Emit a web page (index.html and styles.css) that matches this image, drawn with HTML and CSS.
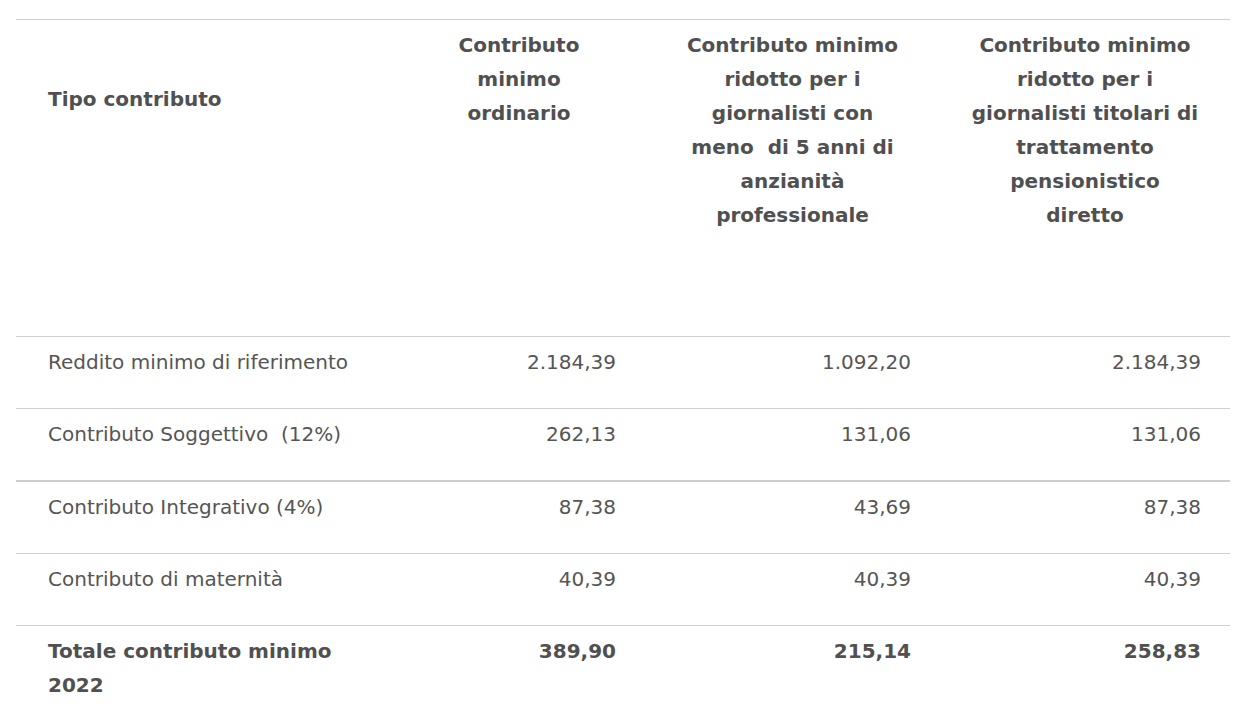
FILE: index.html
```html
<!DOCTYPE html>
<html lang="it">
<head>
<meta charset="utf-8">
<title>Contributo minimo 2022</title>
<link rel="stylesheet" href="styles.css">
</head>
<body>
<table class="tbl">
  <colgroup>
    <col class="c1"><col class="c2"><col class="c3"><col class="c4">
  </colgroup>
  <thead>
    <tr class="head">
      <th class="first">Tipo contributo</th>
      <th>Contributo<br>minimo<br>ordinario</th>
      <th>Contributo minimo<br>ridotto per i<br>giornalisti con<br>meno&nbsp; di 5 anni di<br>anzianità<br>professionale</th>
      <th>Contributo minimo<br>ridotto per i<br>giornalisti titolari di<br>trattamento<br>pensionistico<br>diretto</th>
    </tr>
  </thead>
  <tbody>
    <tr><td>Reddito minimo di riferimento</td><td class="num">2.184,39</td><td class="num">1.092,20</td><td class="num">2.184,39</td></tr>
    <tr><td>Contributo Soggettivo&nbsp; (12%)</td><td class="num">262,13</td><td class="num">131,06</td><td class="num">131,06</td></tr>
    <tr class="thick"><td>Contributo Integrativo (4%)</td><td class="num">87,38</td><td class="num">43,69</td><td class="num">87,38</td></tr>
    <tr><td>Contributo di maternità</td><td class="num">40,39</td><td class="num">40,39</td><td class="num">40,39</td></tr>
    <tr class="total"><td>Totale contributo minimo<br>2022</td><td class="num">389,90</td><td class="num">215,14</td><td class="num">258,83</td></tr>
  </tbody>
</table>
</body>
</html>
```
FILE: styles.css
```css
html, body {
  margin: 0;
  padding: 0;
  background: #ffffff;
}
body {
  padding: 19px 10px 0 16px;
  font-family: "DejaVu Sans", Verdana, sans-serif;
  font-size: 20px;
  color: #555555;
}
.tbl {
  width: 1214px;
  border-collapse: collapse;
  table-layout: fixed;
}
.c1 { width: 377px; }
.c2 { width: 252px; }
.c3 { width: 295px; }
.c4 { width: 290px; }
.tbl th, .tbl td {
  line-height: 34px;
  vertical-align: top;
}
.head {
  border-top: 1px solid #d0d0d0;
  border-bottom: 1px solid #d0d0d0;
}
.head th {
  height: 317px;
  box-sizing: border-box;
  padding: 8px 2px 0 2px;
  font-weight: bold;
  text-align: center;
  color: #505050;
}
.head th.first {
  text-align: left;
  padding-left: 32px;
  padding-top: 62px;
}
.tbl tbody tr {
  border-bottom: 1px solid #d0d0d0;
}
.tbl tbody tr.thick {
  border-top: 2px solid #cccccc;
}
.tbl tbody td {
  height: 72px;
  box-sizing: border-box;
  padding: 8px 29px 0 32px;
}
.tbl tbody tr.thick td {
  height: 73px;
}
.tbl tbody td.num {
  text-align: right;
}
.tbl tbody tr.total {
  border-bottom: none;
}
.tbl tbody tr.total td {
  font-weight: bold;
  color: #505050;
}
```
